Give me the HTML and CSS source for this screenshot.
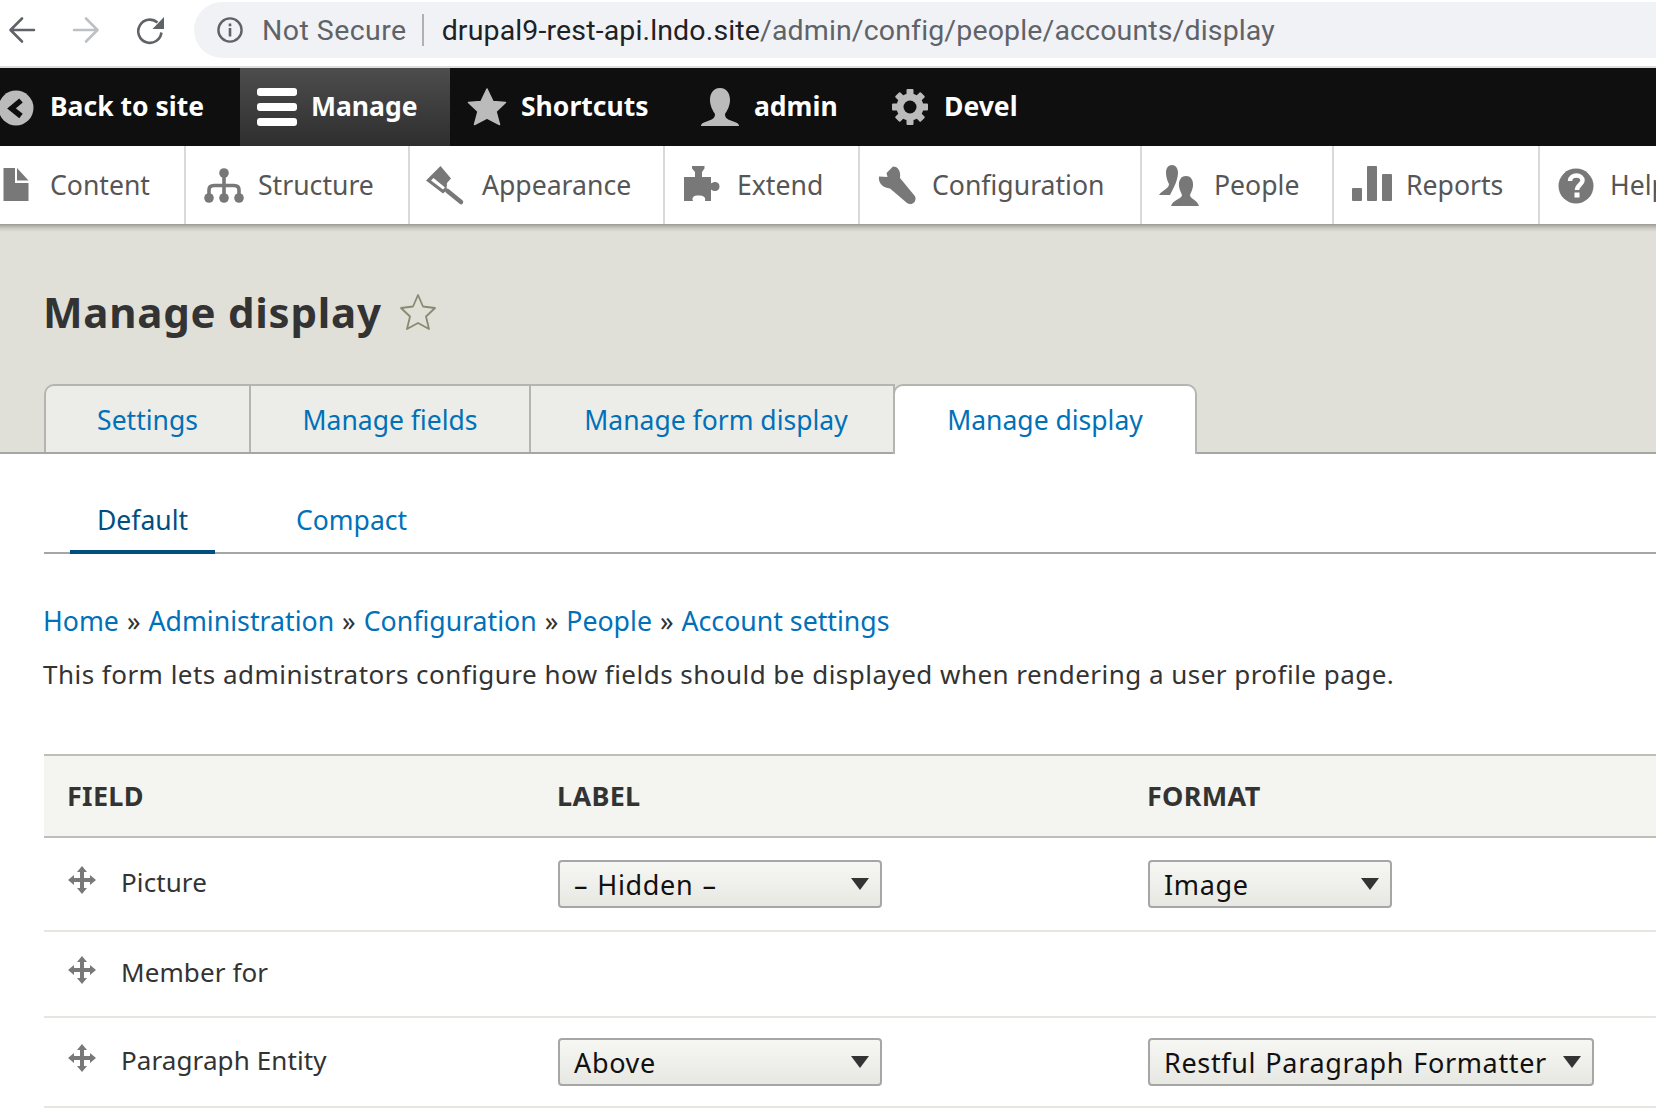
FILE: index.html
```html
<!DOCTYPE html>
<html lang="en">
<head>
  <meta charset="UTF-8" />
  <title>Manage display</title>
  <link rel="stylesheet" href="styles.css">
</head>
<body>

  <svg class="sprites" width="0" height="0">
    <symbol id="drag" viewBox="0 0 28 28">
      <path d="M14 0L19 6H16V12H22V9L28 14L22 19V16H16V22H19L14 28L9 22H12V16H6V19L0 14L6 9V12H12V6H9Z"/>
    </symbol>
  </svg>

  <div class="browser-bar">
    <svg class="nav-icon" viewBox="0 0 26 26" fill="none" stroke="#5f6368" stroke-width="2.6" stroke-linecap="round" stroke-linejoin="round"><path d="M25 13H2M13 1.5L1.5 13L13 24.5"/></svg>
    <svg class="nav-icon" viewBox="0 0 26 26" fill="none" stroke="#bdc1c6" stroke-width="2.6" stroke-linecap="round" stroke-linejoin="round"><path d="M1 13H24M13 1.5L24.5 13L13 24.5"/></svg>
    <svg class="nav-icon" viewBox="0 0 26 26"><path d="M20.5 5.5A11.6 11.6 0 1 0 24.4 15.5" fill="none" stroke="#5f6368" stroke-width="2.6"/><path d="M27 0V12H15.5Z" fill="#5f6368"/></svg>
    <div class="url-pill">
      <svg class="info-icon" viewBox="0 0 26 26"><circle cx="13" cy="13" r="11.6" fill="none" stroke="#5f6368" stroke-width="2.4"/><rect x="11.7" y="11" width="2.6" height="8.5" fill="#5f6368"/><rect x="11.7" y="6.5" width="2.6" height="2.8" fill="#5f6368"/></svg>
      <span class="not-secure">Not Secure</span>
      <span class="url-divider"></span>
      <span class="url"><span class="url-host">drupal9-rest-api.lndo.site</span>/admin/config/people/accounts/display</span>
    </div>
  </div>

  <nav class="toolbar">
    <a class="bar-item">
      <svg class="bar-icon" viewBox="0 0 40 40"><circle cx="20" cy="20" r="17.5" fill="#bbb"/><path d="M25 12.5L15.5 20.5L25 28" fill="none" stroke="#0f0f0f" stroke-width="5.5"/></svg>
      Back to site
    </a>
    <a class="bar-item bar-active">
      <svg class="bar-icon" viewBox="0 0 40 40" fill="#fff"><rect y="0" width="40" height="8" rx="3"/><rect y="15" width="40" height="8" rx="3"/><rect y="30" width="40" height="8" rx="3"/></svg>
      Manage
    </a>
    <a class="bar-item">
      <svg class="bar-icon" viewBox="0 0 40 40"><path d="M20 1L26 13.5L38.5 14.5L29 23.5L32.5 36.5L20 30L7.5 36.5L11 23.5L1.5 14.5L14 13.5Z" fill="#bbb" stroke="#bbb" stroke-width="1.5" stroke-linejoin="round"/></svg>
      Shortcuts
    </a>
    <a class="bar-item">
      <svg class="bar-icon" viewBox="0 0 40 40"><path d="M20 0C13 0 10 6 10 12C10 18 13 23 15 26C15 30 13 31 8 33C4 34.5 1 35 1 38H39C39 35 36 34.5 32 33C27 31 25 30 25 26C27 23 30 18 30 12C30 6 27 0 20 0Z" fill="#bbb"/></svg>
      admin
    </a>
    <a class="bar-item">
      <svg class="bar-icon" viewBox="0 0 40 40">
        <g fill="#bbb">
          <rect x="16.5" y="1" width="7" height="36" rx="1"/>
          <rect x="16.5" y="1" width="7" height="36" rx="1" transform="rotate(45 20 19)"/>
          <rect x="16.5" y="1" width="7" height="36" rx="1" transform="rotate(90 20 19)"/>
          <rect x="16.5" y="1" width="7" height="36" rx="1" transform="rotate(135 20 19)"/>
        </g>
        <circle cx="20" cy="19" r="10" fill="none" stroke="#bbb" stroke-width="7"/>
        <circle cx="20" cy="19" r="6.5" fill="#0f0f0f"/>
      </svg>
      Devel
    </a>
  </nav>

  <nav class="tray">
    <a class="tray-item">
      <svg class="tray-icon" viewBox="0 0 40 40"><path d="M7.5 3H19V18H32.5V36H7.5Z"/><path d="M21 3L32.5 15.5H21Z"/></svg>
      Content
    </a>
    <a class="tray-item">
      <svg class="tray-icon" viewBox="0 0 40 40"><g fill="none" stroke="#787878" stroke-width="3.6"><path d="M20 8V33M5 33V25Q5 20.5 10 20.5H30Q35 20.5 35 25V33"/></g><circle cx="20" cy="8" r="4.8"/><circle cx="5" cy="33" r="4.8"/><circle cx="20" cy="33" r="4.8"/><circle cx="35" cy="33" r="4.8"/></svg>
      Structure
    </a>
    <a class="tray-item">
      <svg class="tray-icon" viewBox="2 0 40 40"><path d="M14.5 1L25 13.5L21 18L20.5 25.5L17 28.5L0 15.5Z"/><path d="M5 15.5L17 24.5L19 22.5L7.5 13Z" fill="#fff"/><path d="M21.5 26L35 37" fill="none" stroke="#787878" stroke-width="4.5" stroke-linecap="round"/></svg>
      Appearance
    </a>
    <a class="tray-item">
      <svg class="tray-icon" viewBox="-1 0 40 40"><path d="M8 1H20.5V3.5L18 7V12H27V18.5C31 15.5 35.5 17 35.5 21.5C35.5 26 31 27.5 27 24.5V36H21C22 32 19.5 30.5 14.5 30.5C9.5 30.5 7.5 32.5 9 36H0V12H11V7L8 3.5Z"/></svg>
      Extend
    </a>
    <a class="tray-item">
      <svg class="tray-icon" viewBox="0 0 40 40"><path d="M15 1.5L8.5 8L9.5 12L1 11.5C0 18 5 23 12 23.5L29 38C31.5 40 35 39 36.5 37C38 34.5 38 32 36 30L22 13C23 6 20 1.5 15 1.5Z"/></svg>
      Configuration
    </a>
    <a class="tray-item">
      <svg class="tray-icon" viewBox="1 0 40 40"><path d="M13 0C8.5 0 7 4 7 8C7 13 9 17 10 19C10 24 3 25 0 30H11L15 22C17 18 19 12 19 8C19 4 17 0 13 0Z"/><path d="M27 11C21.5 11 19.5 16 20 21C20.5 25 22 27 23 30C23 34 14 34.5 12 41H40C38 34.5 31 34 31 30C32 27 33.5 25 34 21C34.5 16 32.5 11 27 11Z"/></svg>
      People
    </a>
    <a class="tray-item">
      <svg class="tray-icon" viewBox="0 0 40 40"><rect x="0" y="23" width="10" height="13" rx="1"/><rect x="15" y="1" width="10" height="35" rx="1"/><rect x="30" y="9" width="10" height="27" rx="1"/></svg>
      Reports
    </a>
    <a class="tray-item">
      <svg class="tray-icon" viewBox="0 0 40 40"><circle cx="20" cy="21" r="17.5"/><path d="M14 16C14 12.5 17 10.5 20.5 10.5C24 10.5 26.5 12.5 26.5 15.5C26.5 19.5 21 20 21 25" fill="none" stroke="#fff" stroke-width="4.5"/><rect x="18.5" y="27.5" width="5" height="5" fill="#fff"/></svg>
      Help
    </a>
  </nav>

  <header class="page-head">
    <div class="title-row">
      <h1>Manage display</h1>
      <svg class="title-star" viewBox="0 0 38 38"><path d="M19 2L24 13.5L36 15L27 23.5L30 36L19 30L8 36L11 23.5L2 15L14 13.5Z" fill="none" stroke="#8a8a72" stroke-width="1.8" stroke-linejoin="round"/></svg>
    </div>
    <ul class="tabs">
      <li><a class="tab tab-first">Settings</a></li>
      <li><a class="tab">Manage fields</a></li>
      <li><a class="tab tab-form">Manage form display</a></li>
      <li><a class="tab tab-active">Manage display</a></li>
    </ul>
  </header>

  <main class="content">
    <ul class="subtabs">
      <li><a class="subtab subtab-active">Default</a></li>
      <li><a class="subtab">Compact</a></li>
    </ul>

    <div class="breadcrumb">
      <a>Home</a> <span>»</span> <a>Administration</a> <span>»</span> <a>Configuration</a> <span>»</span> <a>People</a> <span>»</span> <a>Account settings</a>
    </div>
    <p class="help-text">This form lets administrators configure how fields should be displayed when rendering a user profile page.</p>

    <table class="fields">
      <thead>
        <tr>
          <th class="col-field">Field</th>
          <th class="col-label">Label</th>
          <th>Format</th>
        </tr>
      </thead>
      <tbody>
        <tr class="row-a">
          <td><div class="field-name"><svg class="drag"><use href="#drag"/></svg>Picture</div></td>
          <td><div class="select select-wide"><span>– Hidden –</span><i class="caret"></i></div></td>
          <td><div class="select select-image"><span>Image</span><i class="caret"></i></div></td>
        </tr>
        <tr class="row-b">
          <td><div class="field-name"><svg class="drag"><use href="#drag"/></svg>Member for</div></td>
          <td></td>
          <td></td>
        </tr>
        <tr class="row-c">
          <td><div class="field-name"><svg class="drag"><use href="#drag"/></svg>Paragraph Entity</div></td>
          <td><div class="select select-wide"><span>Above</span><i class="caret"></i></div></td>
          <td><div class="select select-auto"><span>Restful Paragraph Formatter</span><i class="caret"></i></div></td>
        </tr>
      </tbody>
    </table>
  </main>

</body>
</html>
```

FILE: styles.css
```css
html, body {
  margin: 0;
  height: 1110px;
  overflow: hidden;
  background: #fff;
}

body {
  font-family: "Noto Sans", "DejaVu Sans", sans-serif;
  color: #333;
}

.sprites {
  display: block;
  height: 0;
}

ul {
  list-style: none;
  margin: 0;
  padding: 0;
}

/* browser chrome */
.browser-bar {
  height: 66px;
  border-bottom: 2px solid #dcdde0;
  display: flex;
  align-items: flex-start;
  padding-left: 9px;
  gap: 38px;
  overflow: hidden;
}

.nav-icon {
  width: 26px;
  height: 26px;
  margin-top: 17px;
  flex: none;
  overflow: visible;
}

.url-pill {
  flex: 1;
  height: 56px;
  margin: 2px -40px 0 -7px;
  padding-left: 23px;
  background: #f1f2f5;
  border-radius: 28px;
  display: flex;
  align-items: center;
  font-family: Roboto, "Liberation Sans", sans-serif;
  font-size: 28.5px;
  letter-spacing: 0.14px;
  color: #5f6368;
  white-space: nowrap;
}

.info-icon {
  width: 26px;
  height: 26px;
  margin-right: 19px;
}

.not-secure {
  letter-spacing: 0.45px;
}

.url-divider {
  width: 2px;
  height: 32px;
  background: #b0b1b5;
  margin: 0 18px 0 15px;
}

.url-host {
  color: #202124;
}

/* admin toolbar */
.toolbar {
  height: 78px;
  margin-left: -21px;
  background: #0f0f0f;
  display: grid;
  grid-template-columns: 261px 210px 233px 190px 1fr;
  font-size: 26.5px;
  font-weight: 700;
  color: #fff;
}

.bar-item {
  display: flex;
  align-items: center;
  gap: 14px;
  padding: 0 0 3px 17px;
}

.bar-active {
  background: linear-gradient(#4d4d4d, #2e2e2e);
}

.bar-icon {
  width: 40px;
  height: 40px;
  flex: none;
  margin-top: 4px;
}

/* menu tray */
.tray {
  height: 78px;
  width: 1678px;
  margin-left: -22px;
  background: #fff;
  display: grid;
  grid-template-columns: 208px 224px 255px 195px 282px 192px 206px 1fr;
  font-size: 26.6px;
  color: #565656;
  overflow: hidden;
}

.tray-item {
  display: flex;
  align-items: center;
  gap: 14px;
  padding-left: 18px;
  border-right: 2px solid #d9d9d9;
}

.tray-item:last-child {
  border-right: 0;
  padding-left: 16px;
}

.tray-icon {
  width: 40px;
  height: 40px;
  flex: none;
  fill: #787878;
  overflow: visible;
}

/* page header */
.page-head {
  height: 230px;
  box-sizing: border-box;
  padding: 0 0 0 44px;
  background: linear-gradient(#9a9b92, #c9c9c1 4px, #e0e0d8 8px);
  border-bottom: 2px solid #a6a6a6;
  display: flex;
  flex-direction: column;
}

.title-row {
  height: 160px;
  box-sizing: border-box;
  padding-top: 15px;
  display: flex;
  align-items: center;
  gap: 17px;
}

h1 {
  margin: 0 0 0 -1px;
  font-size: 42px;
  font-weight: 700;
  color: #333;
  letter-spacing: 0.75px;
}

.title-star {
  width: 38px;
  height: 38px;
}

.tabs {
  display: grid;
  grid-template-columns: 207px 280px 364px 302px;
  height: 68px;
}

.tab {
  display: flex;
  align-items: center;
  justify-content: center;
  height: 68px;
  box-sizing: border-box;
  padding-top: 2px;
  background: #ecece8;
  border: solid #b5b5b0;
  border-width: 2px 2px 0 0;
  font-size: 26.5px;
  color: #0071b8;
}

.tab-first {
  border-left: 2px solid #b5b5b0;
  border-top-left-radius: 10px;
}

.tab-form {
  padding-left: 8px;
}

.tab-active {
  height: 70px;
  padding-top: 0;
  background: #fff;
  border-width: 2px 2px 0 2px;
  border-radius: 10px 10px 0 0;
  margin-left: -2px;
}

/* page content */
.content {
  padding-left: 44px;
}

.subtabs {
  height: 100px;
  box-sizing: border-box;
  display: flex;
  gap: 54px;
  padding-left: 26px;
  border-bottom: 2px solid #a6a6a6;
}

.subtab {
  display: flex;
  align-items: center;
  height: 100px;
  box-sizing: border-box;
  padding: 36px 27px 0;
  border-bottom: 4px solid transparent;
  font-size: 26.5px;
  color: #0071b8;
}

.subtab-active {
  color: #004f80;
  border-bottom-color: #004f80;
}

.breadcrumb {
  margin: 48px 0 0 -1px;
  font-size: 26.7px;
  line-height: 37px;
  color: #0071b8;
  white-space: nowrap;
}

.breadcrumb span {
  color: #333;
  margin: 0 1px;
}

.help-text {
  margin: 17px 0 0 -1px;
  font-size: 26px;
  letter-spacing: 0.47px;
  line-height: 37px;
  color: #333;
  white-space: nowrap;
}

/* fields table */
.fields {
  margin-top: 61px;
  width: 1700px;
  border-collapse: collapse;
  table-layout: fixed;
  font-size: 26px;
  letter-spacing: 0.1px;
  color: #333;
}

.fields thead tr {
  background: #f4f5f1;
  border-top: 2px solid #bebfb9;
  border-bottom: 2px solid #bebfb9;
}

.fields th {
  height: 78px;
  padding: 0 0 2px 23px;
  text-align: left;
  font-size: 27px;
  font-weight: 700;
  letter-spacing: 0.3px;
  text-transform: uppercase;
}

.col-field {
  width: 467px;
}

.col-label {
  width: 567px;
}

.fields td {
  padding: 0 0 0 24px;
  border-bottom: 2px solid #e6e6e1;
}

.row-a td {
  height: 92px;
}

.row-b td {
  height: 84px;
}

.row-c td {
  height: 88px;
}

.field-name {
  display: flex;
  align-items: center;
  gap: 25px;
  padding-bottom: 4px;
}

.drag {
  width: 28px;
  height: 28px;
  fill: #787878;
  margin-bottom: 4px;
}

.select {
  height: 48px;
  box-sizing: border-box;
  padding: 0 11px 0 14px;
  display: flex;
  align-items: center;
  justify-content: space-between;
  gap: 14px;
  border: 2px solid #a6a6a6;
  border-radius: 4px;
  background: linear-gradient(#f6f6f3, #e8e8e3);
  font-size: 27px;
  letter-spacing: 0.65px;
  word-spacing: 1.5px;
  color: #111;
  white-space: nowrap;
}

.select-wide {
  width: 324px;
}

.select-image {
  width: 244px;
}

.select-auto {
  width: 446px;
}

.caret {
  flex: none;
  width: 0;
  height: 0;
  border-left: 9px solid transparent;
  border-right: 9px solid transparent;
  border-top: 12px solid #333;
}
```
